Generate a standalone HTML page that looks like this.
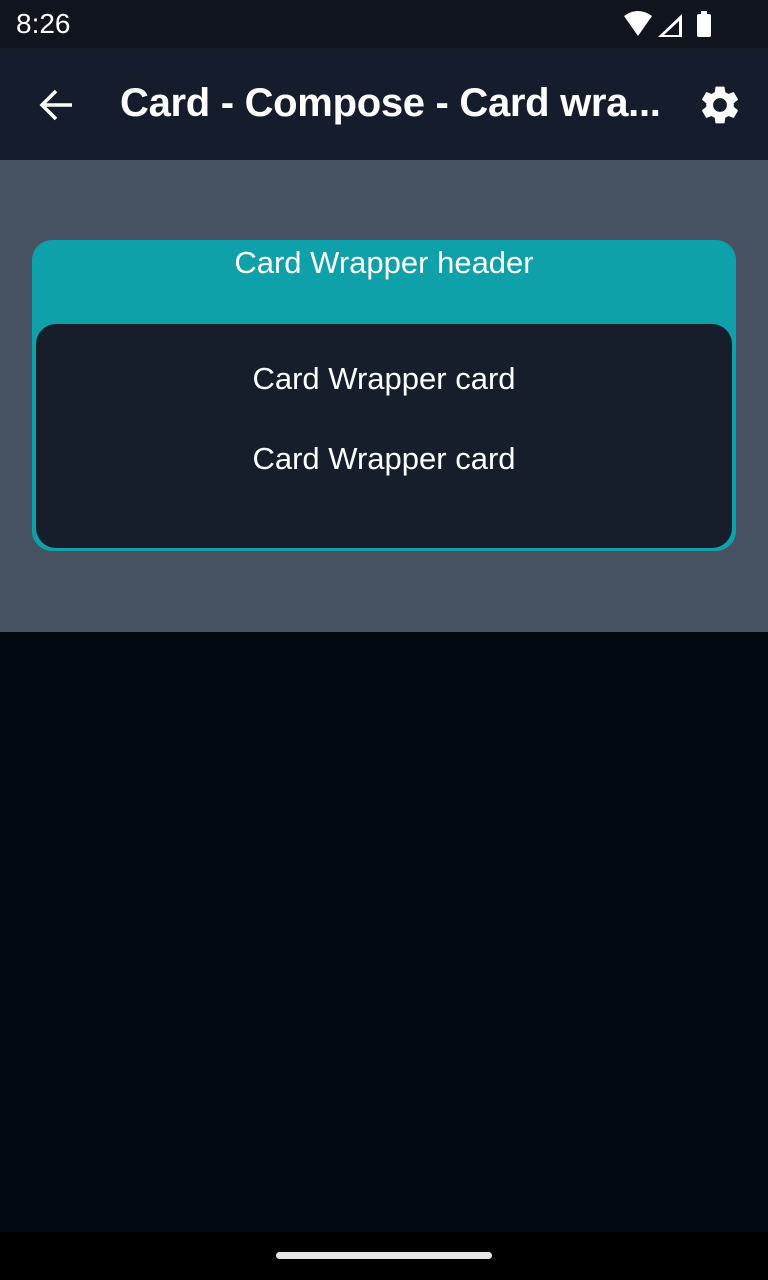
<!DOCTYPE html>
<html><head><style>
body{margin:0;width:768px;height:1280px;background:#020913;font-family:"Liberation Sans",sans-serif;position:relative;overflow:hidden;color:#fff}
.sb{position:absolute;top:0;left:0;width:768px;height:48px;background:#0f141d}
.ab{position:absolute;top:48px;left:0;width:768px;height:112px;background:#151d2c}
.content{position:absolute;top:160px;left:0;width:768px;height:472px;background:#465262}
.outer{position:absolute;left:32px;top:240px;width:704px;height:311px;background:#0fa1aa;border-radius:20px}
.inner{position:absolute;left:36px;top:324px;width:696px;height:224px;background:#161e2c;border-radius:20px}
.t{position:absolute;left:0;width:768px;text-align:center;font-size:31px;line-height:36px}
.nav{position:absolute;bottom:0;left:0;width:768px;height:48px;background:#000}
.pill{position:absolute;left:276px;top:1252px;width:216px;height:7px;border-radius:4px;background:#e6e6e6}
</style></head><body>
<div class="sb"></div>
<div style="position:absolute;left:16px;top:8px;font-size:28px">8:26</div>
<svg style="position:absolute;left:622px;top:10px" width="100" height="28" viewBox="0 0 100 28">
<path d="M2 6 Q16 -4 30 6 L16 26 Z" fill="#fff"/>
<path d="M60 4 L60 27 L36 27 Z M57 11 L42 25 L57 25 Z" fill="#fff" fill-rule="evenodd"/>
<rect x="75" y="4" width="14" height="23" rx="2" fill="#fff"/><rect x="79" y="1" width="6" height="4" fill="#fff"/>
</svg>
<div class="ab"></div>
<svg style="position:absolute;left:38px;top:88px" width="36" height="34" viewBox="0 0 36 34"><path d="M34 17 H4 M18 3 L4 17 L18 31" stroke="#fff" stroke-width="3.5" fill="none"/></svg>
<div style="position:absolute;left:120px;top:81px;font-size:40px;font-weight:bold;letter-spacing:-0.3px;white-space:nowrap">Card - Compose - Card wra...</div>
<svg style="position:absolute;left:696px;top:82px" width="48" height="46" viewBox="0 0 24 24"><path fill="#fff" d="M19.14 12.94c.04-.3.06-.61.06-.94 0-.32-.02-.64-.07-.94l2.03-1.580a.49.49 0 0 0 .12-.61l-1.92-3.32a.49.49 0 0 0-.59-.22l-2.390.96c-.5-.38-1.03-.7-1.62-.94l-.36-2.54a.48.48 0 0 0-.48-.41h-3.84c-.24 0-.43.17-.47.41l-.36 2.54c-.59.24-1.13.57-1.62.94l-2.39-.96a.48.48 0 0 0-.59.22L2.74 8.87c-.12.21-.08.47.12.61l2.03 1.58c-.05.3-.09.63-.09.94s.02.64.07.94l-2.03 1.58a.49.49 0 0 0-.12.61l1.92 3.32c.12.22.37.29.59.22l2.39-.96c.5.38 1.03.7 1.62.94l.36 2.54c.05.24.24.41.48.41h3.84c.24 0 .44-.17.47-.41l.36-2.54c.59-.24 1.130-.56 1.62-.94l2.39.96c.22.08.47 0 .59-.22l1.92-3.32c.12-.22.07-.47-.12-.61l-2.01-1.58zM12 15.6A3.6 3.6 0 1 1 12 8.4a3.6 3.6 0 0 1 0 7.2z"/></svg>
<div class="content"></div>
<div class="outer"></div>
<div class="inner"></div>
<div class="t" style="top:245px">Card Wrapper header</div>
<div class="t" style="top:361px">Card Wrapper card</div>
<div class="t" style="top:441px">Card Wrapper card</div>
<div class="nav"></div>
<div class="pill"></div>
</body></html>
